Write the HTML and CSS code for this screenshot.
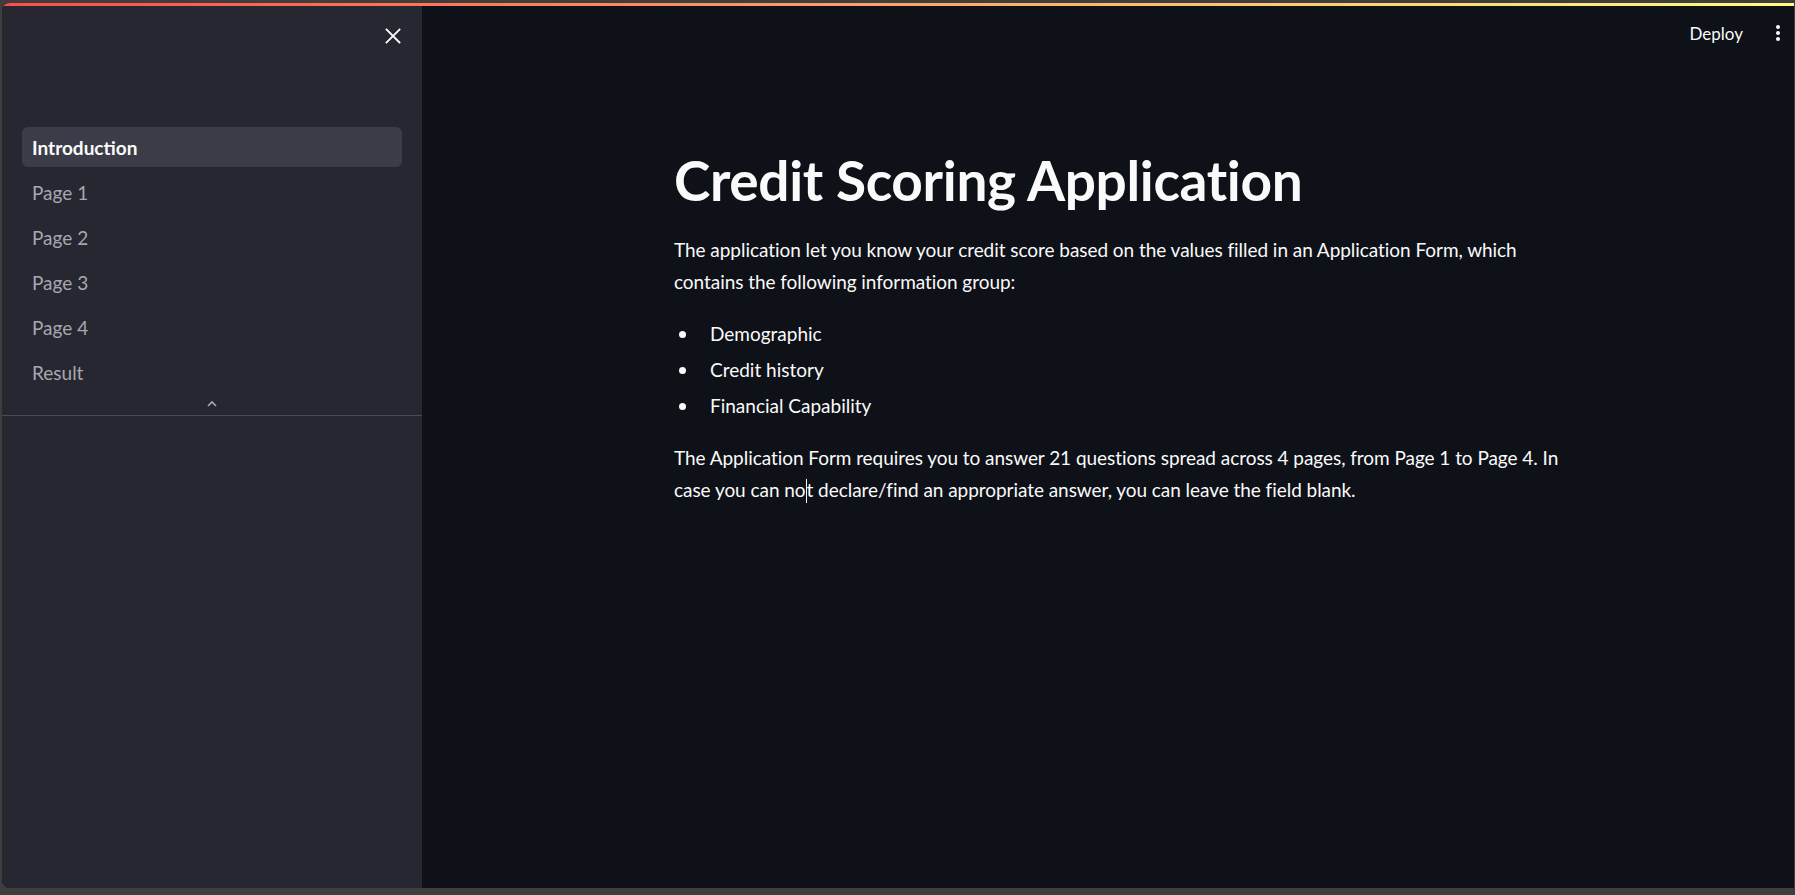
FILE: index.html
```html
<!DOCTYPE html>
<html lang="en">
<head>
<meta charset="utf-8">
<title>Credit Scoring Application</title>
<link rel="stylesheet" href="styles.css">
</head>
<body>
<div class="window">
  <div class="decoration"></div>
  <div class="app">
    <aside class="sidebar">
      <div class="sidebar-header">
        <button class="close-btn" aria-label="Close sidebar">
          <svg width="16" height="16" viewBox="0 0 16 16"><path d="M1.5 1.5 L14.5 14.5 M14.5 1.5 L1.5 14.5" stroke="#fafafa" stroke-width="1.8" stroke-linecap="square" fill="none"/></svg>
        </button>
      </div>
      <nav class="nav">
        <a class="nav-item active">Introduction</a>
        <a class="nav-item">Page 1</a>
        <a class="nav-item">Page 2</a>
        <a class="nav-item">Page 3</a>
        <a class="nav-item">Page 4</a>
        <a class="nav-item">Result</a>
      </nav>
      <div class="collapse">
        <svg width="12" height="8" viewBox="0 0 12 8"><path d="M2 6 L6 2 L10 6" stroke="#a3a8b4" stroke-width="1.6" fill="none"/></svg>
      </div>
      <div class="sidebar-sep"></div>
    </aside>
    <main class="main">
      <header class="topbar">
        <span class="deploy">Deploy</span>
        <span class="kebab"><i></i><i></i><i></i></span>
      </header>
      <section class="block">
        <h1 class="title">Credit Scoring Application</h1>
        <p class="text">The application let you know your credit score based on the values filled in an Application Form, which contains the following information group:</p>
        <ul class="list">
          <li>Demographic</li>
          <li>Credit history</li>
          <li>Financial Capability</li>
        </ul>
        <p class="text">The Application Form requires you to answer 21 questions spread across 4 pages, from Page 1 to Page 4. In case you can no<span class="caret"></span>t declare/find an appropriate answer, you can leave the field blank.</p>
      </section>
    </main>
  </div>
</div>
</body>
</html>
```
FILE: styles.css
```css
* { box-sizing: border-box; }
html, body { margin: 0; padding: 0; }
body {
  background: #3e3e3e;
  width: 1795px;
  height: 895px;
  overflow: hidden;
  font-family: Lato, "Noto Sans", sans-serif;
  color: #fafafa;
}
.window {
  margin: 3px 1px 0 2px;
  height: 885px;
  display: flex;
  flex-direction: column;
  border-radius: 8px 0 0 8px;
  overflow: hidden;
  background: #0e1117;
}
.decoration {
  height: 3px;
  flex: none;
  background: linear-gradient(90deg, #ff4b4b, #fffd80);
}
.app {
  flex: 1;
  display: flex;
  min-height: 0;
}
.sidebar {
  width: 420px;
  flex: none;
  background: #262730;
  display: flex;
  flex-direction: column;
}
.sidebar-header {
  height: 121px;
  display: flex;
  justify-content: flex-end;
  align-items: flex-start;
  padding: 21px 21px 0 0;
}
.close-btn {
  background: none;
  border: 0;
  padding: 0;
  width: 17px;
  height: 17px;
  display: flex;
  align-items: center;
  justify-content: center;
}
.nav {
  display: flex;
  flex-direction: column;
  gap: 5px;
  padding: 0 20px;
}
.nav-item {
  height: 40px;
  display: flex;
  align-items: center;
  padding-left: 10px;
  border-radius: 6px;
  font-size: 19px;
  color: #a5a8b1;
}
.nav-item.active {
  background: #3b3c48;
  color: #fafafa;
  font-weight: 700;
}
.collapse {
  height: 23px;
  display: flex;
  align-items: center;
  justify-content: center;
}
.sidebar-sep {
  height: 1px;
  background: #4a4b55;
}
.main {
  flex: 1;
  display: flex;
  flex-direction: column;
}
.topbar {
  height: 54px;
  display: flex;
  align-items: center;
  justify-content: flex-end;
  padding-right: 12px;
  gap: 31px;
}
.deploy {
  font-size: 17px;
  color: #fafafa;
}
.kebab {
  display: flex;
  flex-direction: column;
  gap: 2px;
  width: 8px;
  align-items: center;
}
.kebab i {
  display: block;
  width: 4px;
  height: 4px;
  border-radius: 50%;
  background: #fafafa;
}
.block {
  width: 900px;
  margin: 0 auto;
  position: relative;
  left: 16px;
  padding-top: 87px;
}
.title {
  margin: 0 0 21px;
  font-size: 55px;
  font-weight: 700;
  line-height: 66px;
  letter-spacing: -0.35px;
}
.text {
  margin: 0 0 20px;
  font-size: 19px;
  line-height: 32px;
  letter-spacing: -0.05px;
}
.list {
  margin: 0 0 20px;
  padding: 0;
  list-style: none;
  font-size: 19px;
  line-height: 32px;
}
.list li {
  display: flex;
  align-items: center;
  margin-bottom: 4px;
}
.list li::before {
  content: "";
  flex: none;
  width: 7px;
  height: 7px;
  border-radius: 50%;
  background: #fafafa;
  margin: 0 24px 0 5px;
}
.list li:last-child { margin-bottom: 0; }
.caret {
  display: inline-block;
  width: 1px;
  height: 24px;
  background: #fafafa;
  vertical-align: -6px;
}
```
